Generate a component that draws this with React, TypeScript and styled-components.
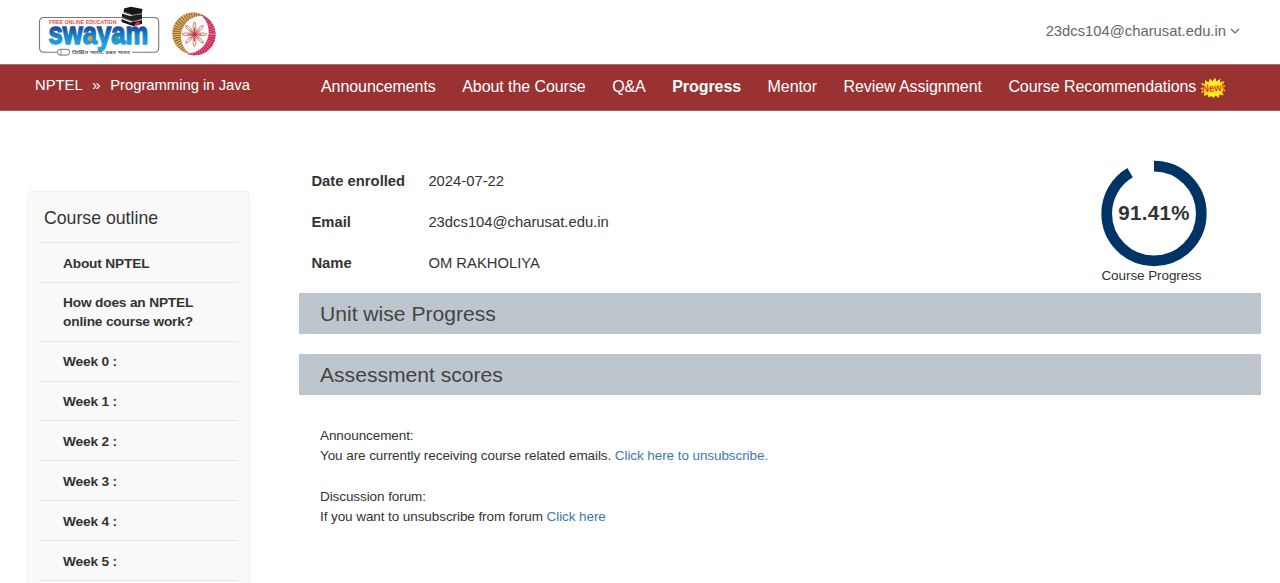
import React from "react";
import styled, { createGlobalStyle } from "styled-components";

const GlobalStyle = createGlobalStyle`
  * { box-sizing: border-box; }
  html, body { margin: 0; padding: 0; background: #fff; }
  body {
    font-family: "Liberation Sans", Arial, sans-serif;
    color: #333;
    overflow: hidden;
  }
`;

const Page = styled.div`
  width: 1280px;
  height: 583px;
  overflow: hidden;
  display: flex;
  flex-direction: column;
`;

const Header = styled.header`
  height: 64px;
  flex: none;
  display: flex;
  justify-content: space-between;
  padding: 0 40px 0 36px;
`;

const Logos = styled.div`
  display: flex;
  gap: 11px;
  padding-top: 4px;
`;

const Account = styled.button`
  display: flex;
  align-items: center;
  gap: 4px;
  height: 62px;
  border: 0;
  padding: 0;
  background: none;
  font: 14.8px "Liberation Sans", Arial, sans-serif;
  color: #666;
`;

const NavBar = styled.nav`
  height: 47px;
  flex: none;
  display: flex;
  background: #993333;
  border-top: 1px solid #b07070;
  border-bottom: 1px solid #a45c5c;
  color: #fff;
  white-space: nowrap;
`;

const Breadcrumb = styled.div`
  width: 321px;
  flex: none;
  display: flex;
  gap: 9.6px;
  padding-left: 35px;
  font-size: 14.8px;
  line-height: 41px;
`;

const NavLinks = styled.div`
  display: flex;
  gap: 26.5px;
  height: 43px;
  font-size: 16px;
  letter-spacing: -0.07px;
  line-height: 43px;
`;

const NavLink = styled.a<{ $active?: boolean }>`
  display: flex;
  align-items: center;
  font-weight: ${(p) => (p.$active ? 700 : 400)};
`;

const BadgeSlot = styled.span`
  display: flex;
  padding: 3px 0 0 4px;
`;

const Body = styled.div`
  display: flex;
  align-items: flex-start;
  padding-left: 27px;
`;

const Sidebar = styled.aside`
  width: 223px;
  height: 420px;
  margin-top: 80px;
  padding: 0 11px;
  background: #f9f9f9;
  border: 1px solid #f1f1f1;
  border-radius: 4px;
`;

const OutlineTitle = styled.h2`
  margin: 0;
  padding-left: 5px;
  height: 50px;
  line-height: 52px;
  font-size: 17.7px;
  font-weight: 400;
`;

const Unit = styled.div`
  border-top: 1px solid #e6e6e6;
  padding: 10.6px 20px 9.25px 24px;
  font-size: 13.7px;
  letter-spacing: -0.17px;
  font-weight: 700;
  line-height: 19px;
`;

const Main = styled.main`
  width: 961.5px;
  margin-left: 49px;
  padding-top: 49px;
`;

const Summary = styled.section`
  display: flex;
  justify-content: space-between;
  height: 133px;
  padding: 0 52.5px 0 12.4px;
`;

const Details = styled.dl`
  margin: 0;
  display: grid;
  grid-template-columns: 117px auto;
  grid-auto-rows: 41px;
  font-size: 14.8px;
  line-height: 43px;
`;

const Term = styled.dt`
  font-weight: 700;
`;

const Value = styled.dd`
  margin: 0;
`;

const Progress = styled.div`
  display: flex;
  flex-direction: column;
  align-items: center;
  width: 108px;
`;

const Dial = styled.div`
  display: grid;
  place-items: center;
  width: 108px;
  height: 108px;
  & > * { grid-area: 1 / 1; }
`;

const Percent = styled.span`
  font-size: 20.5px;
  font-weight: 700;
  letter-spacing: 0.3px;
  padding-bottom: 2px;
`;

const DialLabel = styled.span`
  margin: -1px 5px 0 0;
  font-size: 13.5px;
  letter-spacing: -0.08px;
  line-height: 18px;
`;

const SectionBar = styled.h3`
  margin: 0 0 20px;
  padding-left: 21px;
  height: 41px;
  line-height: 41px;
  background: #bdc6cc;
  color: #444;
  font-size: 21.1px;
  font-weight: 400;
`;

const Notice = styled.p`
  margin: 0 0 21px 21px;
  font-size: 13.5px;
  letter-spacing: -0.08px;
  line-height: 20px;
`;

const Notices = styled.div`
  padding-top: 11px;
`;

const TextLink = styled.a`
  color: #4078b0;
`;

const Drawing = styled.svg`
  display: block;
  overflow: visible;
`;

const SwayamLogo = () => (
  <Drawing width="126" height="54" viewBox="36 4 126 54">
    <defs>
      <linearGradient id="swayamBlue" x1="0" y1="0" x2="0" y2="1">
        <stop offset="0.35" stopColor="#1d4f9f" />
        <stop offset="0.58" stopColor="#1686cc" />
        <stop offset="0.85" stopColor="#25a4e4" />
      </linearGradient>
    </defs>
    <path
      d="M57 52.3H44q-4.5 0-4.5-4.500V22q0-4.500 4.500-4.500H154q4.700 0 4.700 4.500V47.800q0 4.500-4.700 4.500H132"
      fill="none" stroke="#77777b" strokeWidth="1.1"
    />
    <rect x="57.500" y="49.300" width="12" height="5.800" rx="2.500" fill="#fff" stroke="#77777b" strokeWidth="1" />
    <path d="M61 49.500v5.500" stroke="#77777b" strokeWidth="0.8" />
    <text x="49" y="23.900" fontSize="5.300" fontWeight="700" fill="#e8504c" textLength="67.500" lengthAdjust="spacingAndGlyphs">FREE ONLINE EDUCATION</text>
    <text transform="translate(48.500 43.600) scale(1.090 1)" fontSize="30.500" fontWeight="700" fill="url(#swayamBlue)" stroke="url(#swayamBlue)" strokeWidth="1.500" textLength="91.500" lengthAdjust="spacingAndGlyphs">swayam</text>
    <ellipse cx="90.300" cy="38.500" rx="2.200" ry="2.800" fill="#d99a3c" />
    <ellipse cx="117" cy="38.500" rx="2" ry="2.500" fill="#35a566" />
    <text x="72" y="54.300" fontFamily="Noto Sans, sans-serif" fontSize="5" fontWeight="700" fill="#69656a" textLength="58" lengthAdjust="spacingAndGlyphs">शिक्षित भारत, उन्नत भारत</text>
    <path d="M124 8.500l7-1.700 11.500 2.200-1 5-9 1.500-9-3z" fill="#171416" />
    <path d="M122 13.500l8 2.500 12-2v5l-9 3-11-4z" fill="#211d20" />
    <path d="M121.500 19l9 3.500 11.500-2.500v4l-9 2-11.500-4z" fill="#171416" />
    <path d="M124 12l8.500 3M122.500 17.500l9.500 3.800M132.500 15l9-1.500M132 21.500l10-2" stroke="#aaa" strokeWidth="0.6" fill="none" />
    <path d="M134.500 24.500l3.500-3.500 2.500 3-4 1.800z" fill="#ee2638" />
  </Drawing>
);

const goldCrescent = "M202.500 15.500A20.600 20.600 0 1 0 188 53.500A21.200 21.200 0 0 1 202.500 15.500Z";
const redCrescent = "M200.500 15A20.500 20.500 0 0 1 187 54A22.300 22.300 0 0 0 200.500 15Z";

const EmblemLogo = () => (
  <Drawing width="44" height="54" viewBox="172 4 44 54">
    <defs>
      <clipPath id="goldClip"><path d={goldCrescent} /></clipPath>
      <clipPath id="redClip"><path d={redCrescent} /></clipPath>
    </defs>
    <path d={goldCrescent} fill="#dfae5c" stroke="#b98542" strokeWidth="0.5" />
    <path d={redCrescent} fill="#cc2450" stroke="#b81c48" strokeWidth="0.5" />
    <circle cx="193.500" cy="34.300" r="17.500" fill="none" stroke="#75502a" strokeWidth="9" strokeDasharray="0.700 1.500" clipPath="url(#goldClip)" />
    <circle cx="193.500" cy="34.300" r="17.500" fill="none" stroke="#f0a5b6" strokeWidth="9" strokeDasharray="0.500 1.700" clipPath="url(#redClip)" />
    {[0, 45, 90, 135, 180, 225, 270, 315].map((angle) => (
      <g key={angle} transform={`rotate(${angle} 193.500 34.300)`}>
        <path
          d="M193.500 33.500l-1.300-3.500v-6l1.300-2.200 1.300 2.200v6z"
          fill="#fbe6d6" stroke={angle % 90 ? "#b0685a" : "#a8604c"} strokeWidth="0.700"
        />
        <path d="M193.500 33.500v-6" stroke="#c61d4b" strokeWidth="0.800" />
      </g>
    ))}
    <circle cx="193.500" cy="34.300" r="1.800" fill="#c92b50" />
  </Drawing>
);

const NewBadge = () => (
  <Drawing width="26" height="22" viewBox="0 0 26 22">
    <path
      d="M0.500 11.500l3-1.500-2.500-4 4 1 0-4 3.500 2.500 1.500-4 2.500 3 2.500-4 1.500 4 4-3-0.500 4 4.500-1.500-2 4 3 1-2.500 2 2.500 3-3.500 0.500 1.500 4-4-1-1 3.500-3-2.500-2 2.500-2-2-3 1.500-0.500-3-4 1.500 0.500-3.500-3.500 0 2-2.500z"
      fill="#ffef20"
    />
    <text transform="translate(2.600 15.400) rotate(-4) scale(0.860 1)" fontSize="11" fontWeight="700" fill="#ef3a17">New!</text>
  </Drawing>
);

const ProgressRing = ({ value }: { value: number }) => {
  const radius = 47.3;
  const length = 2 * Math.PI * radius;
  return (
    <svg width="108" height="108" viewBox="0 0 108 108">
      <circle
        cx="54" cy="53.500" r={radius} fill="none" stroke="#003366" strokeWidth="10.700"
        strokeDasharray={`${(length * value) / 100} ${length}`}
        transform="rotate(-90 54 53.500)"
      />
    </svg>
  );
};

const links = ["Announcements", "About the Course", "Q&A", "Progress", "Mentor", "Review Assignment"];

const units = [
  "About NPTEL",
  "How does an NPTEL online course work?",
  "Week 0 :",
  "Week 1 :",
  "Week 2 :",
  "Week 3 :",
  "Week 4 :",
  "Week 5 :",
];

const student = [
  ["Date enrolled", "2024-07-22"],
  ["Email", "23dcs104@charusat.edu.in"],
  ["Name", "OM RAKHOLIYA"],
];

export default function App() {
  return (
    <Page>
      <GlobalStyle />
      <Header>
        <Logos>
          <SwayamLogo />
          <EmblemLogo />
        </Logos>
        <Account>
          23dcs104@charusat.edu.in
          <svg width="10" height="8" viewBox="0 0 10 8">
            <path d="M1 2l4 4 4-4" fill="none" stroke="#666" strokeWidth="1.200" />
          </svg>
        </Account>
      </Header>
      <NavBar>
        <Breadcrumb>
          <span>NPTEL</span>
          <span>»</span>
          <span>Programming in Java</span>
        </Breadcrumb>
        <NavLinks>
          {links.map((label) => (
            <NavLink key={label} $active={label === "Progress"}>{label}</NavLink>
          ))}
          <NavLink>
            Course Recommendations
            <BadgeSlot><NewBadge /></BadgeSlot>
          </NavLink>
        </NavLinks>
      </NavBar>
      <Body>
        <Sidebar>
          <OutlineTitle>Course outline</OutlineTitle>
          {units.map((unit) => (
            <Unit key={unit}>{unit}</Unit>
          ))}
          <Unit />
        </Sidebar>
        <Main>
          <Summary>
            <Details>
              {student.map(([term, value]) => (
                <React.Fragment key={term}>
                  <Term>{term}</Term>
                  <Value>{value}</Value>
                </React.Fragment>
              ))}
            </Details>
            <Progress>
              <Dial>
                <ProgressRing value={91.41} />
                <Percent>91.41%</Percent>
              </Dial>
              <DialLabel>Course Progress</DialLabel>
            </Progress>
          </Summary>
          <SectionBar>Unit wise Progress</SectionBar>
          <SectionBar>Assessment scores</SectionBar>
          <Notices>
            <Notice>
              Announcement:
              <br />
              You are currently receiving course related emails. <TextLink>Click here to unsubscribe.</TextLink>
            </Notice>
            <Notice>
              Discussion forum:
              <br />
              If you want to unsubscribe from forum <TextLink>Click here</TextLink>
            </Notice>
          </Notices>
        </Main>
      </Body>
    </Page>
  );
}
